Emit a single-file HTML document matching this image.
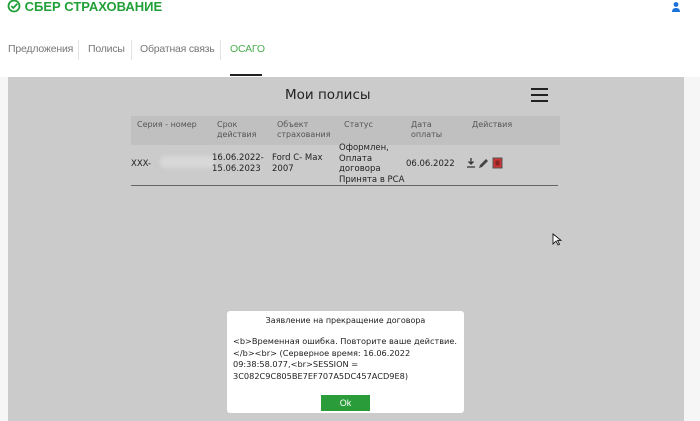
<!DOCTYPE html>
<html><head><meta charset="utf-8"><style>
body{margin:0;width:700px;height:421px;overflow:hidden;background:#fff;font-family:"Liberation Sans","DejaVu Sans",sans-serif;position:relative}
.abs{position:absolute}
.logo{left:7px;top:-1px;color:#21a038;font-weight:bold;font-size:13px;letter-spacing:0}
.nav{top:43px;font-size:10.5px;color:#777;letter-spacing:-0.2px}
.sep{top:40px;width:1px;height:20px;background:#e3e3e3}
.gray{left:8px;top:77px;width:676px;height:344px;background:#cbcbcb}
.rightstrip{left:684px;top:77px;width:16px;height:344px;background:#f6f6f6}
.leftstrip{left:0;top:77px;width:8px;height:344px;background:#f6f6f6}
.dv{font-family:"DejaVu Sans",sans-serif;color:#222}
.th{top:116px;left:131px;width:429px;height:29px;background:#c0c0c0}
.h{top:120px;font-size:8px;color:#555;line-height:10px}
.c{font-size:8.5px;line-height:10.6px;color:#222}
</style></head><body>
<div class="abs logo"><svg width="14" height="14" viewBox="0 0 14 14" style="vertical-align:-2px"><circle cx="7" cy="7" r="5.5" fill="none" stroke="#21a038" stroke-width="1.8"/><path d="M4.3 7l2 2 4-4.3" fill="none" stroke="#21a038" stroke-width="1.8"/></svg> СБЕР СТРАХОВАНИЕ</div>
<svg class="abs" style="left:671px;top:1px" width="10" height="12" viewBox="0 0 10 12"><circle cx="5" cy="3.5" r="2.4" fill="#1a73d9"/><path d="M1 11c0-3 1.8-4 4-4s4 1 4 4z" fill="#1a73d9"/></svg>
<div class="abs nav" style="left:8px">Предложения</div>
<div class="abs sep" style="left:78px"></div>
<div class="abs nav" style="left:88px">Полисы</div>
<div class="abs sep" style="left:131px"></div>
<div class="abs nav" style="left:140px">Обратная связь</div>
<div class="abs sep" style="left:220px"></div>
<div class="abs nav" style="left:230px;color:#4caf50">ОСАГО</div>
<div class="abs" style="left:230px;top:74px;width:32px;height:2px;background:#222"></div>
<div class="abs leftstrip"></div>
<div class="abs gray"></div>
<div class="abs rightstrip"></div>
<div class="abs dv" style="left:285px;top:87px;font-size:13.5px">Мои полисы</div>
<div class="abs" style="left:531px;top:88px;width:17px;height:2px;background:#222;box-shadow:0 6px 0 #222,0 12px 0 #222"></div>
<div class="abs th"></div>
<div class="abs dv h" style="left:137px">Серия - номер</div>
<div class="abs dv h" style="left:217px">Срок<br>действия</div>
<div class="abs dv h" style="left:277px">Объект<br>страхования</div>
<div class="abs dv h" style="left:344px">Статус</div>
<div class="abs dv h" style="left:411px">Дата<br>оплаты</div>
<div class="abs dv h" style="left:472px">Действия</div>
<div class="abs dv c" style="left:131px;top:159px">XXX-</div>
<div class="abs" style="left:160px;top:156px;width:55px;height:12px;background:#d8d8d8;border-radius:6px;filter:blur(2px)"></div>
<div class="abs dv c" style="left:212px;top:153px">16.06.2022-<br>15.06.2023</div>
<div class="abs dv c" style="left:272px;top:153px">Ford C- Max<br>2007</div>
<div class="abs dv c" style="left:339px;top:143px">Оформлен,<br>Оплата<br>договора<br>Принята в РСА</div>
<div class="abs dv c" style="left:406px;top:159px">06.06.2022</div>
<svg class="abs" style="left:466px;top:157px" width="40" height="12" viewBox="0 0 40 12"><path d="M5 1v6M2.5 4.5L5 7l2.5-2.5M1 10h8" stroke="#333" stroke-width="1.3" fill="none"/><path d="M13 11l1-3 6-6 2 2-6 6z" fill="#444"/><rect x="27" y="1" width="9" height="10" fill="#c33" stroke="#555" stroke-width="1"/><rect x="29.5" y="3.5" width="4" height="5" fill="#822"/></svg>
<div class="abs" style="left:131px;top:185px;width:427px;height:1px;background:#666"></div>
<svg class="abs" style="left:552px;top:233px" width="10" height="14" viewBox="0 0 10 14"><path d="M1 1v10l3-3 2 4 1.5-.7-2-4H9z" fill="#fff" stroke="#000" stroke-width=".8"/></svg>
<div class="abs" style="left:227px;top:311px;width:237px;height:102px;background:#fff;border-radius:3px"></div>
<div class="abs dv" style="left:227px;top:316px;width:237px;text-align:center;font-size:8px">Заявление на прекращение договора</div>
<div class="abs dv" style="left:233px;top:336px;font-size:8.2px;line-height:11.5px;color:#222">&lt;b&gt;Временная ошибка. Повторите ваше действие.<br>&lt;/b&gt;&lt;br&gt; (Серверное время: 16.06.2022<br>09:38:58.077,&lt;br&gt;SESSION =<br>3C082C9C805BE7EF707A5DC457ACD9E8)</div>
<div class="abs" style="left:321px;top:395px;width:49px;height:16px;background:#2a9d3a;color:#fff;font-size:9px;text-align:center;line-height:16px">Ok</div>
</body></html>
